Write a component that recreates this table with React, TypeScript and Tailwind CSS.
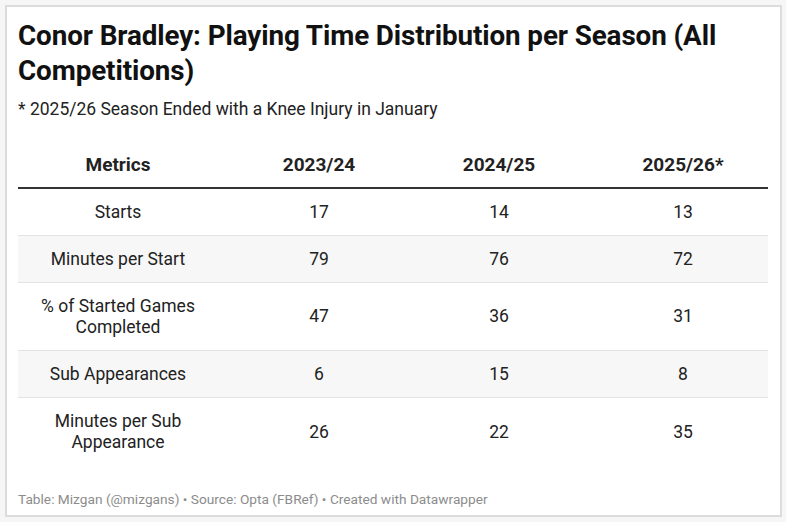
import React from "react";

const rows: { label: string[]; v: string[] }[] = [
  { label: ["Starts"], v: ["17", "14", "13"] },
  { label: ["Minutes per Start"], v: ["79", "76", "72"] },
  { label: ["% of Started Games", "Completed"], v: ["47", "36", "31"] },
  { label: ["Sub Appearances"], v: ["6", "15", "8"] },
  { label: ["Minutes per Sub", "Appearance"], v: ["26", "22", "35"] },
];

export default function App() {
  return (
    <div className="w-[786px] h-[522px] bg-[#f6f6f6] pt-[5px] pl-[5px]" style={{ fontFamily: "Roboto, 'Noto Sans', sans-serif" }}>
      <div className="w-[777px] h-[512px] bg-white border-[2px] border-[#dcdcdc] pt-[11px] pl-[11px] pr-[12px] flex flex-col">
        <h1 className="text-[27.8px] leading-[35px] font-bold text-[#111] tracking-[-0.1px]">
          Conor Bradley: Playing Time Distribution per Season (All Competitions)
        </h1>
        <p className="mt-[9px] text-[17.5px] leading-[24px] text-[#222]">* 2025/26 Season Ended with a Knee Injury in January</p>
        <div className="mt-[22px] w-[750px] text-[#222]">
          <div className="grid grid-cols-[200px_202px_158px_190px] h-[46px] items-center border-b-[2px] border-[#333] text-[19px] font-bold">
            <div className="text-center">Metrics</div>
            <div className="text-center">2023/24</div>
            <div className="text-center">2024/25</div>
            <div className="text-center pl-[20px]">2025/26*</div>
          </div>
          {rows.map((r, i) => (
            <div
              key={i}
              className={`grid grid-cols-[200px_202px_158px_190px] items-center text-[17.5px] leading-[21px] ${
                r.label.length > 1 ? "h-[68px]" : "h-[47px]"
              } ${i % 2 === 1 ? "bg-[#f7f7f7]" : "bg-white"} ${i < rows.length - 1 ? "border-b border-[#e3e3e3]" : ""}`}
            >
              <div className="text-center">
                {r.label.map((l, j) => (
                  <div key={j}>{l}</div>
                ))}
              </div>
              <div className="text-center">{r.v[0]}</div>
              <div className="text-center">{r.v[1]}</div>
              <div className="text-center pl-[20px]">{r.v[2]}</div>
            </div>
          ))}
        </div>
        <div className="mt-[24px] text-[13.7px] leading-[18px] text-[#8c8c8c]">
          Table: Mizgan (@mizgans) • Source: Opta (FBRef) • Created with Datawrapper
        </div>
      </div>
    </div>
  );
}
